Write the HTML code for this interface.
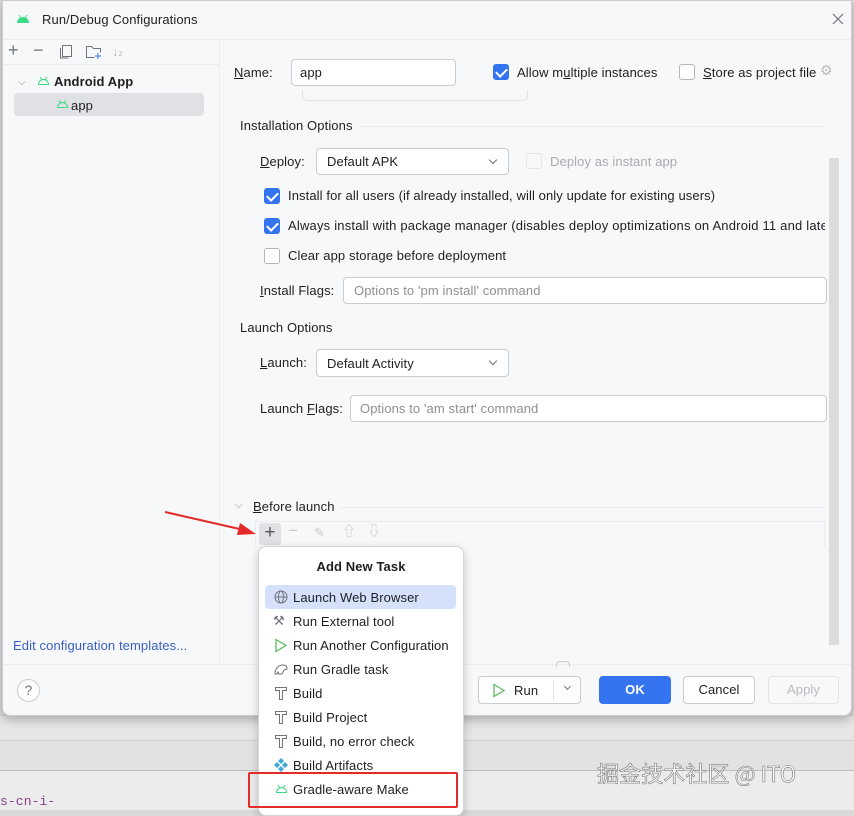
<!DOCTYPE html>
<html><head><meta charset="utf-8"><style>
*{box-sizing:border-box;margin:0;padding:0}
body{width:854px;height:810px;overflow:hidden;background:#d9d9d9;font-family:"Liberation Sans","Noto Sans CJK SC",sans-serif;font-size:13px;line-height:17px;letter-spacing:0.1px;color:#1e1f22;position:relative}
.a{position:absolute;white-space:nowrap}
.dlg{position:absolute;left:2px;top:0;width:850px;height:716px;background:#f7f8fa;border:1px solid #c9ccd1;border-radius:0 0 8px 8px;box-shadow:0 4px 10px rgba(0,0,0,.25)}
.inp{position:absolute;background:#fff;border:1px solid #c9ccd1;border-radius:4px}
.cb{position:absolute;width:16px;height:16px;border:1px solid #b3b6bb;border-radius:3px;background:#fff}
.cb.on{background:#3574f0;border-color:#3574f0}
.cb.on:after{content:"";position:absolute;left:4px;top:1px;width:5px;height:9px;border:solid #fff;border-width:0 2px 2px 0;transform:rotate(45deg)}
.btn{position:absolute;height:28px;border:1px solid #c9ccd1;border-radius:4px;background:#fff;text-align:center;line-height:26px}
.ph{color:#8c8f94}
u{text-decoration:underline}
.dd:after{content:"";position:absolute;right:12px;top:8px;width:5px;height:5px;border:solid #6f737a;border-width:0 1px 1px 0;transform:rotate(45deg)}
</style></head><body>
<div class="a" style="left:0;top:716px;width:854px;height:24px;background:#e6e6e6"></div>
<div class="a" style="left:0;top:740px;width:854px;height:30px;background:#e2e2e2;border-top:1px solid #cfcfcf"></div>
<div class="a" style="left:0;top:770px;width:854px;height:40px;background:#ececec;border-top:1px solid #bdbdbd"></div>
<div class="a" style="left:0;top:793px;font-family:'Liberation Mono',monospace;color:#8a3f8a;font-size:13px">s-cn-i-</div>

<div class="dlg">
<div class="a" style="left:0;top:38px;width:848px;height:1px;background:#ebecf0"></div>
<div class="a" style="left:216px;top:38px;width:1px;height:626px;background:#ebecf0"></div>
<div class="a" style="left:0;top:663px;width:848px;height:1px;background:#ebecf0"></div>
<div class="a" style="left:0;top:63px;width:216px;height:1px;background:#ebecf0"></div>
</div>
<svg class="a" style="left:16px;top:14px" width="14" height="10"><path d="M1 9a6 6 0 0 1 12 0z" fill="#3ddc84"/><path d="M3 1l2 3M11 1l-2 3" stroke="#3ddc84"/></svg>
<div class="a" style="left:42px;top:11px;font-size:13px">Run/Debug Configurations</div>
<svg class="a" style="left:832px;top:13px" width="12" height="12"><path d="M1 1l10 10M11 1L1 11" stroke="#6f737a" stroke-width="1.2"/></svg>
<div class="a" style="left:8px;top:42px;font-size:18px;color:#6f737a">+</div>
<div class="a" style="left:33px;top:42px;font-size:18px;color:#6f737a">−</div>
<svg class="a" style="left:59px;top:44px" width="14" height="15"><rect x="3.5" y="1.5" width="9" height="11" fill="none" stroke="#6f737a"/><path d="M1.5 4v10h8" fill="none" stroke="#6f737a"/></svg>
<svg class="a" style="left:85px;top:44px" width="18" height="16"><path d="M1.5 2.5h5l2 2h7v4M1.5 2.5v11h8" fill="none" stroke="#6f737a"/><path d="M13 9v6M10 12h6" stroke="#3574f0"/></svg>
<div class="a" style="left:112px;top:43px;font-size:13px;color:#b8bbc0">↓<span style="font-size:8px">z</span></div>
<div class="a" style="left:18px;top:74px;color:#8c8f94;font-size:10px">⌵</div>
<svg class="a" style="left:37px;top:76px" width="13" height="10"><path d="M1.5 8.5a5 5 0 0 1 10 0z" fill="none" stroke="#3ddc84"/><path d="M3 1l2 3M10 1l-2 3" stroke="#3ddc84"/></svg>
<div class="a" style="left:54px;top:73px;font-weight:bold">Android App</div>
<div class="a" style="left:14px;top:93px;width:190px;height:23px;background:#dfe1e5;border-radius:4px"></div>
<svg class="a" style="left:56px;top:99px" width="13" height="10"><path d="M1.5 8.5a5 5 0 0 1 10 0z" fill="none" stroke="#3ddc84"/><path d="M3 1l2 3M10 1l-2 3" stroke="#3ddc84"/></svg>
<div class="a" style="left:71px;top:97px">app</div>
<div class="a" style="left:13px;top:637px;color:#3a5fc4">Edit configuration templates...</div>
<div class="a" style="left:17px;top:679px;width:23px;height:23px;border:1px solid #c9ccd1;border-radius:50%;background:#fff;text-align:center;line-height:21px;color:#6f737a;font-size:14px">?</div>

<div class="a" style="left:234px;top:64px"><u>N</u>ame:</div>
<div class="inp" style="left:291px;top:59px;width:165px;height:27px"></div>
<div class="a" style="left:300px;top:64px">app</div>
<div class="a" style="left:302px;top:90px;width:226px;height:11px;border:1px solid #dfe1e5;border-top:none;border-radius:0 0 5px 5px"></div>
<div class="cb on" style="left:493px;top:64px"></div>
<div class="a" style="left:517px;top:64px">Allow m<u>u</u>ltiple instances</div>
<div class="cb" style="left:679px;top:64px"></div>
<div class="a" style="left:703px;top:64px"><u>S</u>tore as project file</div>
<div class="a" style="left:820px;top:62px;color:#b8bbc0;font-size:14px">⚙</div>

<div class="a" style="left:240px;top:117px">Installation Options</div>
<div class="a" style="left:360px;top:126px;width:464px;height:1px;background:#ebecf0"></div>
<div class="a" style="left:260px;top:153px"><u>D</u>eploy:</div>
<div class="inp dd" style="left:316px;top:148px;width:193px;height:27px"></div>
<div class="a" style="left:327px;top:153px">Default APK</div>
<div class="cb" style="left:526px;top:153px;border-color:#e3e4e6;background:#f7f8fa"></div>
<div class="a" style="left:550px;top:153px;color:#a8abb0">Deploy as instant app</div>
<div class="a" style="left:829px;top:158px;width:10px;height:487px;background:#dcdcdc"></div>
<div class="cb on" style="left:264px;top:188px"></div>
<div class="a" style="left:288px;top:187px">Install for all users (if already installed, will only update for existing users)</div>
<div class="cb on" style="left:264px;top:218px"></div>
<div class="a" style="left:288px;top:217px;width:537px;overflow:hidden;letter-spacing:0.2px">Always install with package manager (disables deploy optimizations on Android 11 and later)</div>
<div class="cb" style="left:264px;top:248px"></div>
<div class="a" style="left:288px;top:247px">Clear app storage before deployment</div>
<div class="a" style="left:260px;top:282px"><u>I</u>nstall Flags:</div>
<div class="inp" style="left:343px;top:277px;width:484px;height:27px"></div>
<div class="a ph" style="left:354px;top:282px">Options to 'pm install' command</div>

<div class="a" style="left:240px;top:319px">Launch Options</div>
<div class="a" style="left:260px;top:354px"><u>L</u>aunch:</div>
<div class="inp dd" style="left:316px;top:349px;width:193px;height:28px"></div>
<div class="a" style="left:327px;top:355px">Default Activity</div>
<div class="a" style="left:260px;top:400px">Launch <u>F</u>lags:</div>
<div class="inp" style="left:350px;top:395px;width:477px;height:27px"></div>
<div class="a ph" style="left:360px;top:400px">Options to 'am start' command</div>

<div class="a" style="left:235px;top:497px;color:#8c8f94;font-size:10px">⌵</div>
<div class="a" style="left:253px;top:498px"><u>B</u>efore launch</div>
<div class="a" style="left:340px;top:507px;width:484px;height:1px;background:#ebecf0"></div>
<div class="a" style="left:255px;top:521px;width:570px;height:26px;border:1px solid #ebecf0;border-bottom:none"></div>
<div class="a" style="left:259px;top:523px;width:22px;height:22px;background:#dfe1e5;border-radius:3px;text-align:center;line-height:20px;font-size:19px;color:#555">+</div>
<div class="a" style="left:288px;top:522px;font-size:17px;color:#c8cacd">−</div>
<div class="a" style="left:314px;top:524px;font-size:13px;color:#c8cacd">✎</div>
<div class="a" style="left:342px;top:523px;font-size:14px;color:#c8cacd">⇧</div>
<div class="a" style="left:367px;top:523px;font-size:14px;color:#c8cacd">⇩</div>
<div class="a" style="left:556px;top:661px;width:14px;height:6px;border:1px solid #c9ccd1;border-bottom:none;border-radius:4px 4px 0 0"></div>

<div class="btn" style="left:478px;top:676px;width:103px"></div>
<svg class="a" style="left:492px;top:683px" width="14" height="15"><path d="M2 1.5l10 6-10 6z" fill="none" stroke="#5fb865" stroke-width="1.3"/></svg>
<div class="a" style="left:514px;top:682px">Run</div>
<div class="a" style="left:553px;top:680px;width:1px;height:20px;background:#dfe1e5"></div>
<div class="a" style="left:565px;top:684px;width:5px;height:5px;border:solid #6f737a;border-width:0 1px 1px 0;transform:rotate(45deg)"></div>
<div class="btn" style="left:599px;top:676px;width:72px;background:#3574f0;border-color:#3574f0;color:#fff;font-weight:bold">OK</div>
<div class="btn" style="left:683px;top:676px;width:72px">Cancel</div>
<div class="btn" style="left:768px;top:676px;width:71px;background:#f7f8fa;border-color:#e3e4e6;color:#b8bbc0">Apply</div>

<div class="a" style="left:258px;top:546px;width:206px;height:270px;background:#fff;border:1px solid #d3d5d9;border-radius:8px;box-shadow:0 3px 10px rgba(0,0,0,.2)"></div>
<div class="a" style="left:258px;top:558px;width:206px;text-align:center;font-weight:bold">Add New Task</div>
<div class="a" style="left:265px;top:585px;width:191px;height:24px;background:#d5e0fb;border-radius:4px"></div>
<svg class="a" style="left:274px;top:590px" width="14" height="14"><circle cx="7" cy="7" r="6" fill="none" stroke="#6f737a"/><ellipse cx="7" cy="7" rx="2.5" ry="6" fill="none" stroke="#6f737a"/><path d="M1 7h12" stroke="#6f737a"/></svg>
<div class="a" style="left:293px;top:589px">Launch Web Browser</div>
<div class="a" style="left:273px;top:612px;font-size:13px;color:#6f737a">⚒</div>
<div class="a" style="left:293px;top:613px">Run External tool</div>
<svg class="a" style="left:274px;top:638px" width="14" height="15"><path d="M2 1.5l10 6-10 6z" fill="none" stroke="#5fb865" stroke-width="1.3"/></svg>
<div class="a" style="left:293px;top:637px">Run Another Configuration</div>
<svg class="a" style="left:273px;top:662px" width="16" height="14"><path d="M2 12c0-5 3-9 8-9 3 0 4 2 4 4l-3 1-2 4H6l-1-2-1 2z" fill="none" stroke="#6f737a"/></svg>
<div class="a" style="left:293px;top:661px">Run Gradle task</div>
<svg class="a" style="left:274px;top:686px" width="14" height="15"><path d="M1.5 1.5h11v3h-4v9h-3v-9h-4z" fill="none" stroke="#6f737a"/></svg>
<div class="a" style="left:293px;top:685px">Build</div>
<svg class="a" style="left:274px;top:710px" width="14" height="15"><path d="M1.5 1.5h11v3h-4v9h-3v-9h-4z" fill="none" stroke="#6f737a"/></svg>
<div class="a" style="left:293px;top:709px">Build Project</div>
<svg class="a" style="left:274px;top:734px" width="14" height="15"><path d="M1.5 1.5h11v3h-4v9h-3v-9h-4z" fill="none" stroke="#6f737a"/></svg>
<div class="a" style="left:293px;top:733px">Build, no error check</div>
<svg class="a" style="left:274px;top:758px" width="14" height="14"><path d="M7 0l3 3-3 3-3-3zM3 4l3 3-3 3-3-3zM11 4l3 3-3 3-3-3zM7 8l3 3-3 3-3-3z" fill="#3fa7d6"/></svg>
<div class="a" style="left:293px;top:757px">Build Artifacts</div>
<svg class="a" style="left:275px;top:784px" width="13" height="10"><path d="M1.5 8.5a5 5 0 0 1 10 0z" fill="none" stroke="#3ddc84"/><path d="M3 1l2 3M10 1l-2 3" stroke="#3ddc84"/></svg>
<div class="a" style="left:293px;top:781px">Gradle-aware Make</div>
<div class="a" style="left:248px;top:772px;width:210px;height:36px;border:2px solid #e52a2a;border-radius:2px"></div>
<svg class="a" style="left:160px;top:505px" width="100" height="40"><path d="M5 7L84 25" stroke="#e52a2a" stroke-width="2"/><path d="M96 29L80 18l-3 12z" fill="#e52a2a"/></svg>
<div class="a" style="left:597px;top:759px;font-size:22px;line-height:28px;color:#fff;-webkit-text-stroke:0.6px #777;font-family:'Noto Sans CJK SC','Liberation Sans',sans-serif">掘金技术社区 @ ITO</div>
</body></html>
